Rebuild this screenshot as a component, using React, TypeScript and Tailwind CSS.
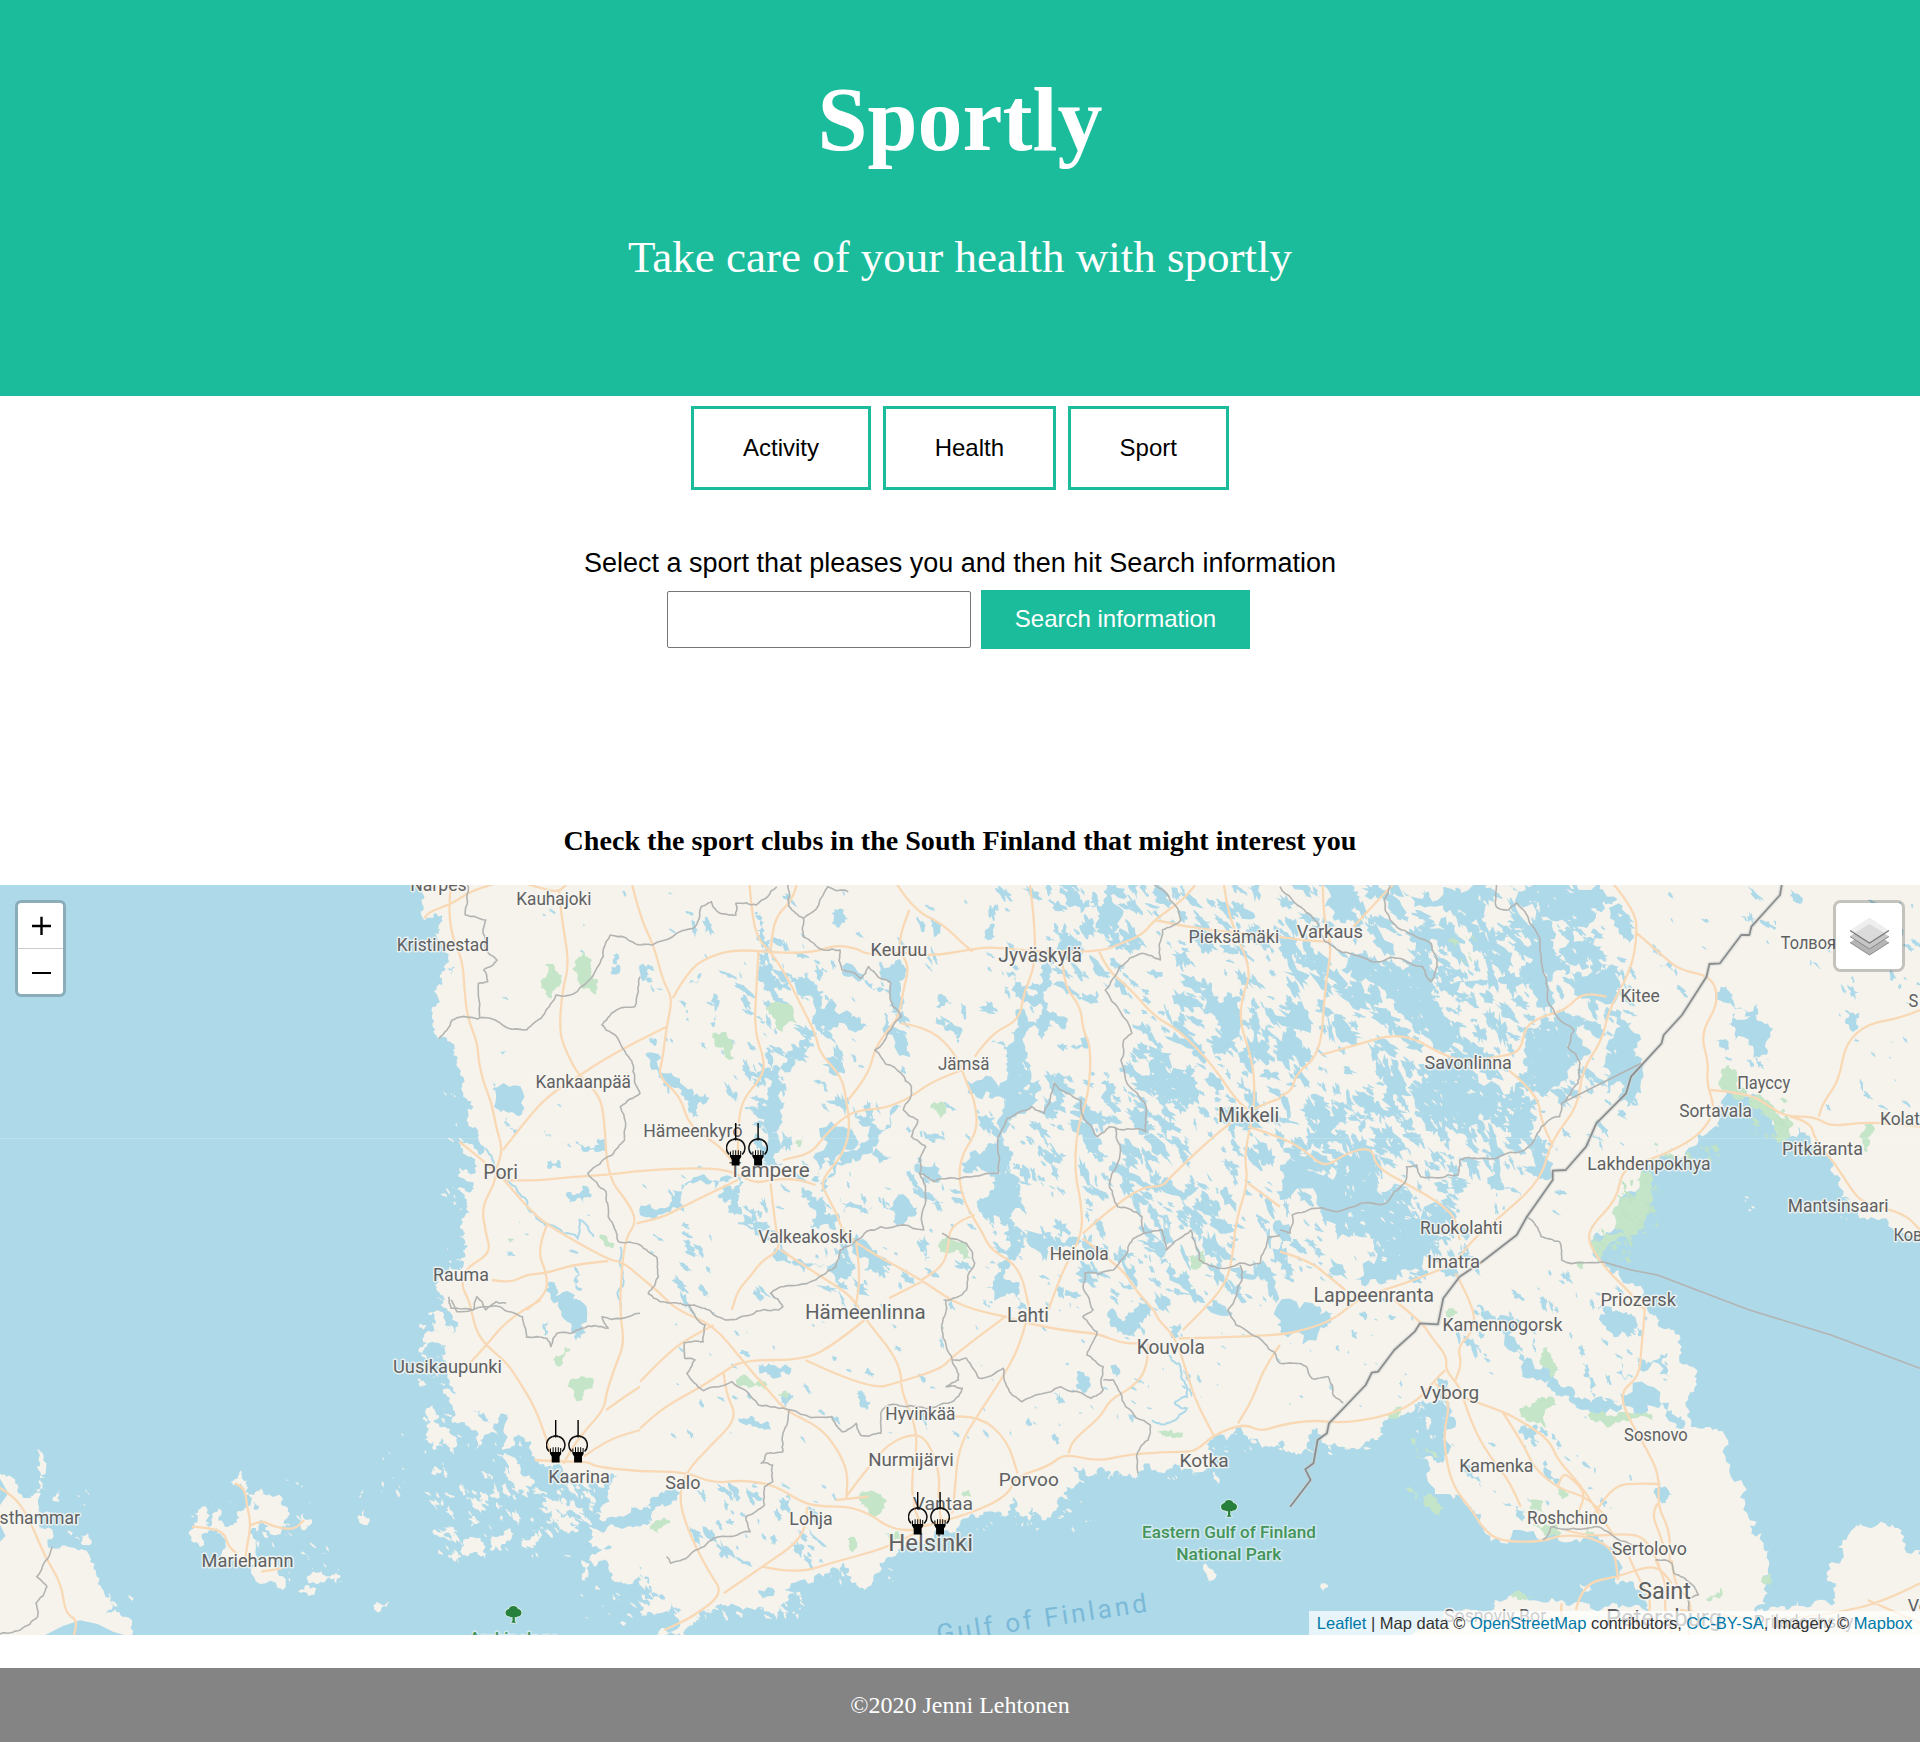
import React from "react";

/* ---------- map geometry ---------- */

type Pt = [number, number];
type Field = [string, number, number, number, number, number, number];
type Label = [string, string, number, number, number, number];

// Each map tile is described on a stretched grid: 2.45 units per px across, 3 units per px down.
const ORIGINS: Record<string, Pt> = {
  A: [0, -5],
  B: [640, -5],
  C: [1280, -5],
  D: [0, 415],
  E: [640, 415],
  F: [1280, 415],
};

const at = (spec: string): Pt[] => {
  const out: Pt[] = [];
  let origin: Pt = ORIGINS.A;
  spec
    .trim()
    .split(/\s+/)
    .forEach((token) => {
      if (ORIGINS[token]) {
        origin = ORIGINS[token];
        return;
      }
      const [x, y] = token.split(",").map(Number);
      out.push([origin[0] + x / 2.45, origin[1] + y / 3]);
    });
  return out;
};

const random = (seed: number) => () => {
  seed = (seed + 0x6d2b79f5) | 0;
  let t = Math.imul(seed ^ (seed >>> 15), 1 | seed);
  t = (t + Math.imul(t ^ (t >>> 7), 61 | t)) ^ t;
  return ((t ^ (t >>> 14)) >>> 0) / 4294967296;
};

const toPath = (pts: Pt[], closed: boolean) =>
  "M" + pts.map(([x, y]) => `${x.toFixed(1)} ${y.toFixed(1)}`).join("L") + (closed ? "Z" : "");

// Midpoint displacement gives shores and borders their ragged outline.
const rough = (pts: Pt[], amount: number, seed: number, closed = true): Pt[] => {
  const rnd = random(seed);
  let cur = pts;
  for (let level = 0; level < 3; level++) {
    const next: Pt[] = [];
    const n = cur.length;
    for (let i = 0; i < n; i++) {
      const a = cur[i];
      next.push(a);
      if (!closed && i === n - 1) break;
      const b = cur[(i + 1) % n];
      const dx = b[0] - a[0];
      const dy = b[1] - a[1];
      const len = Math.hypot(dx, dy);
      if (len < 2.5 || len > 300) continue;
      const k = (rnd() - 0.5) * amount;
      next.push([(a[0] + b[0]) / 2 - dy * k, (a[1] + b[1]) / 2 + dx * k]);
    }
    cur = next;
  }
  return cur;
};

const smooth = (pts: Pt[]) => {
  let d = `M${pts[0][0].toFixed(1)} ${pts[0][1].toFixed(1)}`;
  for (let i = 1; i < pts.length - 1; i++) {
    const mx = (pts[i][0] + pts[i + 1][0]) / 2;
    const my = (pts[i][1] + pts[i + 1][1]) / 2;
    d += `Q${pts[i][0].toFixed(1)} ${pts[i][1].toFixed(1)} ${mx.toFixed(1)} ${my.toFixed(1)}`;
  }
  const last = pts[pts.length - 1];
  return d + `L${last[0].toFixed(1)} ${last[1].toFixed(1)}`;
};

const area = (specs: string[], amount: number, seed: number) =>
  specs.map((s, i) => toPath(rough(at(s), amount, seed + i * 17), true)).join("");

const MAINLAND =
  "A 1022,10 1040,50 1030,95 1040,120 1065,100 1082,105 1080,150 1065,160 1085,200 1098,230 1082,275 1083,315 1070,318 1068,380 1060,440 1075,475 1095,480 1110,510 1120,560 1135,590 1130,625 1160,680 1145,690 1150,740 1168,745 1172,780 1210,850 1170,812 1140,790 1125,790 1150,830 1170,860 1150,880 1125,865 1140,900 1160,915 1155,935 1120,930 1145,960 1150,1000 1130,1020 1140,1060 1125,1070 1160,1100 1135,1110 1140,1130 1115,1140 1135,1160 1080,1190 1065,1215 1090,1260 1070,1250 D 1085,0 1105,40 1110,100 1085,120 1080,165 1100,200 1118,280 1085,280 1110,330 1110,370 1140,375 1165,450 1185,410 1200,400 1210,370 1245,340 1235,400 1230,450 1260,410 1280,410 1300,450 1310,480 1340,500 1380,515 1400,545 1440,560 1500,520 1512,530 1490,580 1455,645 1500,650 1568,630 E 20,615 60,580 85,560 60,620 30,660 0,680 D 1500,672 1450,690 1440,725 1500,740 1445,770 1455,800 1490,790 1500,840 1530,850 1568,790 E 20,830 30,880 60,890 80,920 110,930 60,985 40,1004 80,1000 130,975 140,950 175,935 215,920 290,920 350,910 380,880 300,895 290,870 370,850 450,830 490,815 500,790 520,850 550,870 580,820 610,770 640,740 700,730 760,700 800,655 840,645 885,650 905,620 915,590 940,650 950,680 960,600 985,660 1010,640 1030,590 1055,600 1045,560 1090,550 1060,500 1100,530 1130,500 1150,540 1200,520 1220,530 1240,490 1290,510 1310,490 1350,505 1400,460 1405,410 1440,420 1460,380 1490,420 1540,440 1568,440 F 0,425 10,450 40,465 75,455 78,390 92,385 110,430 150,440 200,440 240,420 245,385 290,350 320,340 350,300 395,300 390,230 412,250 415,320 400,400 403,480 375,480 345,475 360,530 425,597 440,580 470,630 490,640 503,700 540,728 640,725 680,707 750,710 800,735 820,775 828,855 880,870 900,880 905,935 830,925 760,925 700,915 690,900 600,895 560,888 525,900 520,930 490,940 400,945 350,990 300,1020 1600,1020 C 1600,0 A 1022,0";

const SHORES = [
  "D -10,515 15,530 45,580 100,580 125,640 90,650 130,700 115,720 130,745 190,750 220,770 235,820 255,880 260,940 300,950 318,1010 -10,1010",
  "D 85,450 100,455 105,480 115,570 95,570 90,500",
  "D 130,590 145,570 145,605",
  "D 200,705 215,700 220,735 202,735",
  "D 565,545 590,512 605,540 600,575 640,565 690,590 710,640 700,680 660,680 640,660 630,700 620,660 635,620 615,600 610,700 632,720 630,780 600,795 540,770 530,700 545,690 515,690 500,700 490,740 468,720 475,670 495,620 510,680 535,625 560,680 580,640 605,620 595,560",
  "D 615,805 680,790 700,860 680,865",
  "D 650,690 690,680 680,705",
  "D 745,640 765,665 740,690 735,665",
  "D 755,850 770,815 800,830 825,820 825,850 785,845",
  "D 730,875 750,855 775,865",
  "D 880,645 892,628 905,655 890,675",
  "D 877,590 888,568 885,600",
  "D 915,915 930,910 955,905 930,935",
  "D 1043,330 1060,318 1075,345 1050,360",
  "D 1048,40 1065,35 1090,75 1105,125 1060,125 1035,115 1045,95 1075,100",
  "D 1025,150 1045,125 1035,160",
  "D 1045,375 1090,380 1120,430 1110,465 1080,415 1065,450 1050,420",
  "D 1235,460 1265,480 1275,520 1310,550 1290,580 1245,540",
  "D 1330,605 1370,590 1400,610 1380,650 1335,640",
  "D 1370,690 1385,650 1405,660 1390,700",
  "D 1130,750 1160,712 1185,735 1180,770 1145,770",
  "D 1200,750 1205,700 1240,690 1260,700 1230,750",
  "D 1280,740 1305,690 1320,720 1295,740",
  "D 1060,690 1100,675 1115,700 1075,710",
  "D 1150,640 1165,655 1155,680",
  "D 1425,780 1445,790 1440,850 1425,825",
  "E 0,880 30,900 90,880 140,820 160,850 120,920 40,940 15,930",
  "E 1385,790 1405,840 1395,852",
  "E 1405,515 1415,530 1415,552",
  "F 103,850 118,855 108,875",
  "F 735,850 765,870 755,875",
  "F 355,350 370,365 362,390",
];

const WATERS = [
  "C 1060,745 1010,800 960,830 900,850 885,900 830,965 825,1030 780,1060 762,1085 770,1130 795,1150 830,1170 890,1230 900,1290 F 930,60 965,90 985,160 1010,200 1017,260 1000,300 1005,355 1060,390 1090,440 1130,540 1145,640 1155,700 1185,730 1197,780 1195,880 1165,920 1170,940 1180,925 1240,930 1300,920 1360,910 1362,860 1340,815 1380,760 1400,690 1420,670 1490,680 1520,700 1568,750 1610,760 C 1610,1060 1500,1045 1440,1020 1400,960 1370,920 1355,880 1350,840 1300,780 1270,740 1230,770 1190,690 1150,650 1090,650 1070,690",
  "B 300,560 340,560 400,540 430,480 400,480 360,520 345,560 335,600 340,640 345,700 325,760 330,820 350,850 310,855 295,800 285,700 255,685 310,680 320,620",
  "B 280,100 290,98 300,160 318,180 325,215 300,205 285,150",
  "B 290,215 310,270 330,300 370,330 370,280 385,300 410,285 435,320 445,360 440,385 500,395 540,410 560,440 500,430 440,420 470,470 430,440 430,400 400,350 310,320 290,270",
  "B 600,265 630,240 650,280 640,330 630,400 610,400 612,350 598,300",
  "B 985,255 1012,255 1010,310 1000,370 1020,400 1045,440 1005,420 985,480 960,440 950,520 945,570 930,640 980,600 975,660 915,690 900,720 905,800 900,860 925,910 935,960 910,1000 920,1050 945,1100 940,1140 905,1140 890,1060 840,1010 830,960 860,930 870,890 800,880 790,870 850,800 880,780 890,700 870,650 830,655 800,600 880,630 900,560 900,520 860,490 910,490 925,430 970,430 985,400 955,370 970,330 910,330 895,275 920,290 940,320 985,310",
  "B 880,1145 915,1150 900,1200 930,1230 950,1290 920,1250 900,1240 845,1225 870,1200",
  "B 940,1050 1010,1070 1080,1080 1060,1105 1000,1100 950,1090",
  "B 240,890 225,930 190,950 225,960 220,1000 250,1030 320,1040 270,1010 240,980 245,930",
  "B 230,893 140,890 80,930 60,985 0,1005 60,1000 100,960 140,905 200,905",
  "B 15,520 60,580 110,620 160,640 140,680 140,715 120,700 110,660 60,620 45,570",
  "B 400,920 450,950 450,1000 490,1010 480,1050 420,1045 430,990 395,950",
  "B 490,950 570,980 540,1000 500,1000",
  "B 440,910 470,860 540,800 560,760 620,700 640,680 600,750 570,800 620,830 540,840 480,880 460,940",
  "B 430,820 500,740 520,740 530,800 480,830 440,870 440,900 420,900",
  "B 330,1105 420,1150 480,1110 500,1135 525,1150 520,1180 480,1215 440,1160 370,1145",
  "B 600,980 660,960 665,1010 620,1025",
  "B 530,1060 580,1110 580,1180 550,1130",
  "B 680,1080 710,1130 700,1145",
  "B 680,850 740,890 700,895",
  "B 720,940 745,970 730,990",
  "B 495,260 560,320 610,340 570,310 530,300",
  "B 605,420 640,460 660,530 625,480",
  "B 360,530 380,505 410,500 380,540",
  "B 725,410 780,440 780,490 760,450",
  "B 470,130 490,85 510,120 490,140",
  "B 845,160 865,130 860,180",
  "B 725,380 750,350 765,375 735,385",
  "B 180,340 190,380 182,440 172,430",
  "B 120,310 150,280 140,310",
  "B 1210,500 1240,540 1270,530 1330,570 1370,560 1360,620 1340,680 1290,670 1260,620 1220,590 1250,580",
  "B 1380,330 1420,370 1470,350 1470,400 1450,500 1410,480 1420,430 1380,390",
  "B 1150,580 1165,640 1150,680 1130,650",
  "B 1080,680 1120,700 1115,760 1110,820 1085,780",
  "B 1210,680 1245,690 1240,760 1210,740",
  "B 1055,500 1090,460 1100,500 1070,510",
  "B 1025,190 1040,130 1060,170 1070,220 1045,240",
  "B 1030,20 1070,60 1130,80 1150,30 1175,120 1160,160 1120,90 1080,100",
  "B 1280,900 1370,920 1320,930",
  "B 1275,1080 1300,1150 1330,1210 1300,1190",
  "C 125,185 200,220 260,240 340,250 380,290 370,350 400,400 440,450 480,520 400,520 340,430 280,360 230,310 150,270",
  "C 390,320 480,310 600,280 610,300 520,320 420,360",
  "C 560,15 620,15 780,10 790,70 740,140 640,110 660,180 700,240 740,290 830,300 830,345 720,290 680,270 660,330 665,380 620,340 590,300 620,240 600,160",
  "C 90,10 170,15 185,120 150,130 110,80",
  "C 300,30 400,20 500,100 520,150 440,90 380,80",
  "C 690,150 760,170 780,240 830,260 830,300 740,270",
  "C 350,590 480,580 600,600 635,660 630,710 590,760 540,740 490,700 500,750 420,740 350,700 330,640",
  "C 595,470 600,440 640,410 700,400 720,420 760,510 730,540 700,600 620,610 595,550",
  "C 800,380 830,390 860,450 870,530 890,560 885,640 850,680 845,620 800,640 780,560 830,540 820,460",
  "C 1115,400 1160,400 1195,430 1195,510 1160,535 1115,480 1095,435",
  "C 1385,390 1420,400 1410,450 1385,420",
  "C 1080,320 1110,360 1170,370 1170,385 1110,380",
  "C 1065,480 1085,480 1090,515",
  "C 930,255 970,260 970,290",
  "C 830,70 855,140 855,190 830,160",
  "C 150,830 220,800 230,880 310,920 430,1000 420,1060 360,1090 350,1150 290,1180 240,1210 180,1200 240,1120 200,1060 100,1020 100,990 0,960 0,870 60,850 130,900",
  "C 620,800 655,780 670,850 650,900 620,890",
  "C 80,700 140,720 130,780 60,810 90,750",
  "C 0,1020 50,1100 60,1120 0,1100",
  "C 515,890 580,930 590,950 530,930",
  "C 780,1290 850,1295 F 870,50 860,100 800,90 790,20",
  "F 880,170 920,180 950,160 955,230 890,215",
  "F 480,20 530,60 580,130 620,190 680,240 720,290 760,310 840,310 840,325 740,330 690,290 660,240 590,200 560,150 500,60",
  "F 830,280 930,300 960,330 990,380 970,370 900,315 840,305",
  "F 585,375 620,375 635,430 600,420",
  "F 740,190 760,240 780,290 830,300 770,300 745,230",
  "F 820,160 870,230 850,240",
  "F 665,400 690,440 680,450",
  "F 650,480 690,540 675,560",
  "F 450,500 490,540 495,560 460,530",
  "F 930,540 945,560 945,610 935,610",
  "F 545,605 600,650 595,665",
  "F 0,60 80,10 130,40 100,80 0,95",
  "A 1345,1205 1400,1240 1420,1270 D 1420,0 1435,100 1410,120 1385,60 1350,0",
  "A 1205,600 1220,620 1285,685 1240,695 1215,655",
  "A 1240,710 1270,755 1250,740",
  "A 1410,785 1430,800 1455,805 1490,775 1488,800 1470,815 1440,815",
  "A 1393,935 1425,920 1450,945 1430,968 1397,968",
  "A 1395,1155 1425,1225 1410,1225",
  "A 1340,845 1370,840 1370,865",
  "A 1495,280 1500,222 1518,235",
  "A 1095,265 1115,262 1108,285",
  "A 1225,515 1242,515 1235,535",
  "A 1335,750 1355,765 1340,770",
  "D 1330,105 1330,70 1345,60 1342,100",
  "E 290,195 325,195 370,215 320,230 292,220",
  "E 530,280 550,285 555,330 538,315",
  "E 1070,220 1100,230 1080,270 1055,275 1075,250",
  "E 1150,30 1190,60 1220,20 1255,50 1235,55 1210,110 1170,100",
  "E 1295,75 1325,70 1320,110 1300,100",
  "E 240,355 290,365 320,390 300,385",
  "E 345,290 380,300 360,320",
  "D 1155,330 1190,350 1200,370 1180,355",
];

// Narrow rivers and channels.
const RIVERS = [
  "A 1190,805 1210,850 1250,910 1290,960 1310,1000 1350,1035 1415,1075 1420,1020 1455,1070",
  "A 1520,1100 1525,1190 1522,1290",
  "B 15,520 45,570 70,640",
  "B 240,1030 330,1055 345,1110",
  "E 1295,165 1320,190 1330,240 1340,290 1310,310 1340,325 1290,370 1255,360",
  "B 600,400 620,460 660,530",
  "C 610,300 660,330 665,400",
];

// Tile, x0, y0, x1, y1, count, largest half-length in px.
const LAKE_FIELDS: Field[] = [
  ["A", 1180, 40, 1560, 1290, 16, 4],
  ["B", 0, 30, 560, 500, 45, 7],
  ["B", 230, 220, 560, 480, 24, 9],
  ["B", 200, 440, 700, 840, 44, 9],
  ["B", 280, 540, 350, 860, 22, 8],
  ["B", 0, 840, 700, 1290, 66, 9],
  ["B", 560, 30, 1000, 420, 36, 8],
  ["B", 900, 260, 1040, 1140, 30, 10],
  ["B", 1000, 15, 1568, 360, 140, 11],
  ["B", 990, 560, 1300, 840, 54, 9],
  ["B", 1190, 360, 1568, 860, 160, 11],
  ["B", 680, 680, 1080, 1060, 50, 9],
  ["B", 1080, 860, 1568, 1290, 165, 10],
  ["B", 560, 1040, 1080, 1290, 34, 7],
  ["C", 0, 15, 600, 560, 240, 13],
  ["C", 580, 20, 880, 420, 66, 11],
  ["C", 0, 560, 640, 880, 215, 12],
  ["C", 0, 860, 460, 1200, 140, 9],
  ["C", 590, 400, 880, 800, 66, 9],
  ["C", 440, 800, 700, 1000, 16, 7],
  ["C", 880, 30, 1568, 340, 30, 7],
  ["C", 1340, 230, 1568, 700, 16, 5],
  ["C", 1000, 380, 1260, 560, 8, 4],
  ["C", 440, 1150, 880, 1290, 14, 7],
  ["E", 40, 30, 780, 420, 40, 5],
  ["E", 800, 0, 1290, 420, 40, 5],
  ["E", 1280, 0, 1568, 300, 18, 4],
  ["E", 130, 540, 480, 800, 46, 8],
  ["F", 0, 0, 330, 320, 22, 4],
  ["F", 420, 0, 980, 240, 36, 8],
  ["F", 420, 300, 940, 640, 24, 5],
];

const ISLAND_FIELDS: Field[] = [
  ["A", 1085, 600, 1140, 1200, 16, 3],
  ["D", 1030, 60, 1110, 380, 24, 4],
  ["D", 1040, 330, 1320, 620, 46, 5],
  ["D", 1050, 560, 1430, 770, 70, 6],
  ["D", 1340, 560, 1460, 700, 34, 7],
  ["D", 930, 400, 1000, 600, 10, 3],
  ["D", 460, 530, 780, 780, 30, 3],
  ["D", 700, 740, 860, 880, 12, 3],
  ["D", 60, 570, 220, 720, 14, 3],
  ["D", 230, 880, 330, 1000, 12, 4],
  ["D", 1420, 860, 1568, 980, 12, 3],
  ["E", 0, 620, 150, 960, 60, 7],
  ["E", 140, 880, 400, 950, 40, 4],
  ["E", 460, 770, 640, 850, 18, 3],
  ["E", 800, 600, 1130, 690, 30, 3],
  ["E", 1100, 500, 1400, 540, 16, 3],
  ["E", 1400, 380, 1568, 460, 14, 3],
  ["F", 0, 440, 240, 465, 14, 3],
  ["F", 330, 280, 410, 420, 18, 3],
  ["C", 1370, 900, 1400, 1030, 8, 4],
  ["C", 1135, 950, 1175, 995, 4, 4],
  ["C", 130, 820, 440, 1150, 110, 3],
  ["C", 340, 580, 630, 740, 60, 3],
  ["C", 190, 220, 440, 500, 40, 3],
  ["C", 600, 30, 800, 300, 26, 4],
  ["C", 600, 430, 730, 600, 16, 2],
  ["B", 1230, 540, 1370, 680, 26, 2],
  ["B", 840, 540, 960, 1100, 34, 2],
];

const PARK_FIELDS: Field[] = [
  ["C", 830, 900, 930, 1060, 60, 4],
  ["C", 770, 1050, 860, 1150, 34, 3],
  ["C", 900, 790, 1080, 850, 26, 4],
  ["C", 1150, 650, 1250, 770, 34, 4],
  ["C", 420, 170, 490, 250, 12, 4],
];

const scatter = (fields: Field[], seed: number) => {
  const rnd = random(seed);
  let d = "";
  fields.forEach(([tile, x0, y0, x1, y1, count, size]) => {
    const [ox, oy] = ORIGINS[tile];
    for (let i = 0; i < count; i++) {
      const cx = ox + (x0 + rnd() * (x1 - x0)) / 2.45;
      const cy = oy + (y0 + rnd() * (y1 - y0)) / 3;
      const long = size * (0.3 + Math.pow(rnd(), 1.8) * 0.95);
      const wide = long * (0.22 + rnd() * 0.36);
      const angle = 0.85 + (rnd() - 0.5) * 1.2;
      const pts: Pt[] = [];
      for (let k = 0; k < 16; k++) {
        const t = (k / 16) * Math.PI * 2;
        const r = 0.4 + rnd() * 1.05;
        const px = Math.cos(t) * long * r;
        const py = Math.sin(t) * wide * r;
        pts.push([
          cx + px * Math.cos(angle) - py * Math.sin(angle),
          cy + px * Math.sin(angle) + py * Math.cos(angle),
        ]);
      }
      d += toPath(pts, true);
    }
  });
  return d;
};

const PARKS = [
  "A 1335,255 1360,260 1370,320 1352,355 1325,325",
  "A 1410,240 1425,210 1450,240 1448,270 1465,300 1460,345 1435,325 1415,290",
  "A 1468,1065 1505,1090 1500,1105 1480,1090",
  "A 1243,1078 1260,1080 1250,1090",
  "B 308,385 330,365 385,430 350,455 325,410",
  "B 178,458 212,455 232,535 208,530 182,490",
  "B 712,685 740,665 750,700 735,720",
  "B 378,790 400,768 388,802",
  "B 735,1085 760,1065 800,1090 815,1140 790,1140 780,1110 735,1115",
  "B 1343,1130 1382,1110 1370,1165 1348,1160",
  "C 1083,590 1100,555 1120,580 1120,625 1145,635 1140,650 1085,630",
  "C 1150,650 1190,660 1215,700 1255,725 1250,770 1210,775 1195,710",
  "C 1430,730 1452,735 1440,815 1430,810",
  "C 885,870 910,880 915,960 890,1030 850,1070 820,1040 830,965 880,930",
  "C 762,1085 800,1060 860,1085 800,1100 790,1145",
  "C 730,1145 745,1145 745,1165 728,1160",
  "D 1355,180 1385,140 1398,150 1370,200",
  "D 1390,260 1425,228 1455,240 1430,275 1415,305 1405,285",
  "E 235,240 265,232 305,245 305,270 265,265",
  "E 337,285 365,280 360,305",
  "E 540,580 570,572 605,600 600,625 560,640 540,615",
  "E 25,690 45,660 75,665 45,700",
  "E 1268,395 1300,388 1330,395 1330,410 1290,410",
  "E 510,715 525,710 525,760 512,745",
  "E 790,575 805,570 810,590 792,590",
  "E 600,700 625,695 640,720 610,725",
  "F 640,160 655,142 675,190 665,235 640,195",
  "F 587,325 615,320 640,290 678,315 650,385 590,350",
  "F 755,343 820,350 860,340 910,342 920,362 830,368 800,382 760,360",
  "F 262,345 295,318 290,355",
  "F 318,412 330,415 345,475 335,470",
  "F 358,435 390,470 375,470",
  "F 350,590 375,590 402,625 390,647 355,620",
  "F 308,565 335,580 335,600",
  "F 610,605 645,608 645,635 612,630",
  "F 617,672 680,675 690,700 640,690",
  "F 682,568 708,578 690,597",
  "F 750,680 770,700 765,715 748,700",
  "F 1185,825 1203,820 1200,865 1183,850",
  "F 1045,895 1080,862 1080,890 1050,905",
  "F 565,882 600,882 620,892 580,892",
  "F 405,35 420,25 435,40 415,55",
];

const ROADS = [
  "A 1105,10 1098,90 1110,180 1133,240 1138,330 1145,410 1170,490 1172,540 1185,610 1205,670 1215,740 1232,810 1215,870 1212,910 1180,980 1190,1060 1203,1120 1140,1165 1130,1220 D 1150,0 1165,90 1192,138 1240,185 1270,240 1310,320 1340,420 1350,470 1385,490",
  "A 1040,115 1045,98 1110,70 1150,35 1210,12",
  "A 1290,12 1340,30 1370,35 1390,10",
  "A 1370,35 1375,110 1395,250 1378,330 1370,450 1385,510 1418,588 1465,640 1480,700 1488,890 1540,970 1560,1025 1535,1070 1525,1140 1518,1290 D 1530,130 1510,190 1485,280 1480,330 1420,410 1385,480",
  "A 1568,480 1490,530 1418,588 1340,650 1290,720 1232,810",
  "A 1125,785 1215,870 1290,980 1340,1035 1490,1140 1525,1145 1568,1190 B 50,1240 90,1290 E 180,75 250,180 320,280 360,335 440,380 485,450 510,520 505,600",
  "A 1240,900 1310,903 1400,890 1488,885 1568,872 B 140,863 220,870 280,910 320,900 380,895 430,915",
  "A 1340,1035 1315,1110 1340,1180 1340,1240 1290,1290",
  "A 1205,1200 1250,1210 1290,1183 1340,1180 1400,1155 1490,1143",
  "A 1548,10 B 0,110 35,200 55,300 80,355 65,440 55,540 45,590 100,650 120,740 200,800 240,870",
  "D 1325,0 1250,50 1190,138 1150,190",
  "D 1485,330 1530,290 1568,260",
  "D 1430,470 1485,420 1568,390",
  "D 1310,480 1385,485 1440,485 1460,500 1568,515 E 110,515 180,550 250,540 330,555 400,610 450,620 510,620 560,640 620,690 690,690",
  "B 268,10 275,110 290,180 320,215 360,290 400,390 430,460 440,520 495,590 505,660 515,740 500,820 440,905 460,950 485,1010 495,1050 530,1090 600,1140 690,1200 760,1260 820,1290 E 895,50",
  "B 385,10 375,60 330,110 320,210",
  "B 80,355 120,265 180,225 240,208 360,220 430,215 480,195 530,205 560,225 650,215 720,228 800,210 860,200 970,215 1130,215 1180,190 1230,165 1260,120 1330,60 1360,15",
  "B 0,480 65,440",
  "B 290,215 285,330 280,450 305,540 300,590 250,660 240,740 240,850",
  "B 628,10 670,90 740,130 790,190 815,215",
  "B 660,90 640,150 635,210 660,260 645,330 635,410 600,460 575,510 560,580 510,660",
  "B 640,430 700,440 760,500 790,570 800,610 820,660 828,750 790,820 780,890 795,970 840,1060 860,1110 930,1160 955,1290",
  "B 790,570 720,600 660,655 600,685 540,690 500,710 450,770 420,820 350,840",
  "B 820,530 860,460 930,420 940,340 970,250 965,110 955,10",
  "B 1035,215 1035,310 1080,380 1085,450 1105,500 1100,640 1070,750 1065,880 1080,960 1085,1060 1040,1160 1000,1290",
  "B 1125,215 1145,270 1200,325 1260,410 1320,450 1400,550 1460,660 1500,700",
  "B 1430,10 1440,110 1500,270 1475,350 1470,430 1490,500 1505,580 1505,690 1480,820 1490,910 1460,1020 1450,1150 1430,1220 1380,1290 E 1330,90",
  "B 1568,655 1510,680 1430,740 1300,890 1280,920 1230,920 1150,990 1085,1060",
  "B 1260,120 1340,140 1430,155 1568,170 C 60,182 125,185",
  "B 1085,1075 1150,1140 1190,1180 1220,1240 1260,1290 E 1270,60 1310,110 1330,180 1360,300 1405,405",
  "B 1490,740 1568,770 C 60,810 110,865 160,820 225,800 235,860 300,905 380,960 430,1010 440,1080",
  "B 1490,910 1568,980",
  "B 320,910 330,1030 345,1110 300,1140 270,1190 240,1230 225,1290",
  "B 240,900 120,970 60,1010 0,1028 A 1560,1030",
  "B 345,1110 430,1180 510,1240 540,1290 E 560,70 620,160 640,220 640,270 670,360 680,430 665,530 670,620 690,680",
  "B 530,1090 540,1180 530,1270",
  "B 690,1205 610,1255",
  "B 820,1005 760,1030 755,1110 740,1160 690,1200",
  "E 550,60 480,130 405,180 250,180 200,220 150,260 60,320 0,385",
  "E 180,75 110,120 60,170 0,245",
  "E 205,220 210,280 240,355 170,440 110,520 95,600 120,700 170,820 205,880 130,950 60,990",
  "E 405,180 560,270 640,245 740,205 765,170 895,50",
  "E 945,70 930,140 885,240 830,340 780,440 770,590 765,640",
  "E 770,350 830,345 900,420 925,520",
  "E 895,50 945,70 1060,95 1120,100 1180,130 1220,130",
  "E 690,680 790,650 900,590 920,530 1000,500 1040,460 1120,485 1200,462 1320,455 1360,455 1405,405 1480,370 1520,395 1568,375 F 80,360 160,370 270,345 340,300 380,240 405,210",
  "E 1320,115 1400,113 1568,105 F 60,90 130,60 200,-10 C 280,1220",
  "E 1245,130 1245,200 1210,260 1150,300 1130,350 1060,420 1050,460",
  "E 1568,135 1530,200 1500,300 1465,370",
  "E 205,880 300,800 400,715 410,620",
  "E 300,800 380,822 480,785 600,745 690,690",
  "E 505,590 560,500 610,430 670,400 705,420 735,520 730,600 740,680",
  "E 480,600 560,590",
  "C 105,10 105,110 128,200 110,320 100,520 40,580 30,630 0,650",
  "C 100,525 200,490 270,465 330,475 390,520 450,545 540,530 590,515 600,440 640,410 700,390 740,338 800,350",
  "C 180,140 240,60 280,10",
  "C 815,10 870,90 875,170 860,270 805,390 790,480 740,570 730,680 665,780 640,900 540,1010 470,1080 430,1150 340,1195 280,1220",
  "C 560,570 630,640 640,720 665,790",
  "C 875,160 940,230 980,270 1060,290 1075,370 1030,460 1050,550 1045,610 1065,680 1050,730 1010,780 930,830 840,860 825,960 760,1040 755,1090 800,1170 860,1240 890,1290 F 895,20 885,150 880,230 830,280 860,370 900,450 930,530 925,620 955,690 955,790",
  "C 1055,630 1150,640 1200,680 1240,710 1310,710 1350,740 1440,725 1568,740",
  "C 1250,710 1300,725 1310,780 1360,850 1400,930 1430,970 1530,1000 1568,1050",
  "C 1568,390 1520,415 1440,430 1385,490 1370,600 1330,670 1320,710",
  "C 0,1115 70,1140 130,1200 160,1230",
  "C 430,1180 480,1290 F 470,100 435,140 445,190 430,240",
  "F 280,0 350,70 370,110 410,170 405,210 440,260 450,300 480,400 520,480 560,540 590,620",
  "F 380,250 420,290 400,400 410,500 430,570 470,630 500,690 540,725 640,725 690,705 760,710 820,750 828,840",
  "F 440,290 540,330 600,370 660,420 680,480 740,560 780,640 820,710",
  "F 545,335 600,440 620,500 680,565 750,590 800,650",
  "F 680,565 690,520 710,530 750,580 730,640",
  "F 930,552 880,550 820,555 770,640",
  "F 925,610 910,640 930,700 945,760",
  "F 725,930 740,850 830,830 920,790 960,850",
  "F 700,690 750,710 860,700 900,720 930,800",
  "F 855,770 880,840 910,900 900,960",
  "F 920,780 950,850 940,930 960,1000",
  "F 960,780 965,860 1010,900 1000,1010",
  "F 1568,850 1480,905 1360,940 1230,960 1100,950 980,930",
  "F 1440,900 1568,970",
  "F 690,910 685,960 720,1005",
  "D -5,560 40,590 80,680 110,770 150,850 160,940 190,960 180,1010",
  "D 575,550 600,560 605,620 615,670 605,740 600,790",
  "D 470,680 520,685 550,700 560,740 580,760",
  "D 615,675 640,660 670,680 720,690 745,660",
  "D 640,815 690,805",
];

const BORDERS = [
  "A 1145,10 1145,60 1140,105 1190,120 1188,200 1218,240 1185,270 1195,305 1172,310 1175,412",
  "A 1075,475 1108,420 1140,410 1200,415 1290,450 1335,400 1362,345 1403,343 1470,250 1495,165 1568,195 B 30,195 130,145 150,80 175,65 190,95 235,105 235,70 285,75 335,20",
  "A 1568,290 1555,380 1498,400 1475,435 1500,460 1540,530 1555,590 1568,640 1520,680 1530,780 1500,825 1440,880 1485,935 1490,1010 1515,1085 1568,1095 B 40,1130 45,1190 20,1240 50,1265 100,1270 E 120,15 160,75 155,125 108,128 110,175 135,180 115,220 155,272 225,245 290,315 370,330 470,350 495,395 530,370 540,405 590,400 590,340 610,315 680,320 765,305 790,265 750,260 780,240 765,180 740,90 750,0 B 745,1260 800,1230 820,1150 800,1090 740,1060",
  "B 362,10 365,80 400,115 400,170 450,210 490,210 495,270 540,295 560,260 615,310 620,380 640,410 575,510 640,580 665,620 645,690 680,720 665,770 700,800 685,880 720,905 800,890 878,880 900,715 960,680 990,700 1015,610 1080,660 1090,720 1120,770 1150,740 1240,755 1240,680 1190,600 1185,480 1205,460 1140,330 1175,260 1230,220 1275,240 1280,150 1325,120 1290,40 1260,15",
  "B 400,115 460,20 510,35",
  "B 1165,745 1170,850 1150,920 1170,980 1230,1010 1235,1060 1280,1050 1290,1110 1350,1050 1370,1140 1420,1165 1520,1150 1540,1070 1568,1065",
  "B 685,880 700,960 695,1050 590,1040 530,1080 490,1110 480,1160 440,1190 350,1220 320,1240 350,1280 E 340,30 270,45 215,60 170,30 120,15",
  "B 1235,1060 1200,1090 1160,1170 1090,1180 1085,1220 1110,1290 E 1085,50 1120,95 1095,165 1135,200 1135,270 1105,295 1030,260 935,305 905,275 890,205 830,235 800,175 765,180",
  "E 1135,240 1160,240 1190,320 1250,375 1245,420 1220,455 1220,520",
  "E 365,330 350,400 350,455 310,460 297,490 325,495 325,545 305,560 305,615 260,650 270,695 180,715 130,755 75,790 65,770",
  "B 1470,1155 1475,1200 1440,1290 E 1460,75 1530,130 1568,190 F 65,200 78,235 118,230 130,285 155,310",
  "D 1105,0 1120,35 1225,20 1280,50 1290,112 1340,115 1350,140 1365,100 1425,85 1490,85 1475,50 1568,40",
  "A 1100,1250 1105,1285 D 1160,30 1165,0 A 1168,1250 1190,1290 1215,1265 1240,1270",
  "D 128,740 90,830 115,860 88,910 92,950 50,990 0,1002",
  "C 530,10 530,80 560,90 580,68 600,95 640,230 655,360 720,450 705,500 735,550 730,610 690,670 685,710 640,740 590,815 490,835 440,840 435,885 345,890 335,855 310,860 305,910 260,970 140,995 95,985 30,1005 25,1060 0,1050",
  "C 605,1010 640,1070 685,1085 690,1140 790,1145",
  "C 0,20 60,90 85,120 110,185 170,220 240,245 290,235 350,260 370,305 385,260 370,190 310,155 270,120 255,60 270,20",
  "F 645,720 665,680 720,685 770,680 830,720 880,740",
  "F 920,780 960,790 965,820 1005,850 1025,885 1000,900 1005,940",
];

// Borders that run straight across water.
const STRAIGHT_BORDERS = [
  "C 690,670 885,550",
  "C 790,1145 860,1170 925,1185 1000,1220 1150,1290 F 1350,105 1568,205",
];

const STATE_BORDER =
  "C 1230,10 1225,45 1155,140 1150,165 1130,165 1078,250 1052,252 1045,290 985,405 940,465 935,490 860,590 848,640 775,730 750,800 700,870 668,872 668,900 605,1010 580,1065 495,1145 440,1190 400,1255 F 387,73 343,70 330,95 280,150 240,215 225,218 210,255 120,370 115,400 92,420 82,490 62,508 75,540 25,620";

// Tile, text, left edge, right edge, baseline, font size.
const LABELS: Label[] = [
  ["A", "Närpes", 1005, 1143, 33, 17.5],
  ["A", "Kauhajoki", 1265, 1449, 74, 17.5],
  ["A", "Kristinestad", 972, 1198, 212, 17.5],
  ["A", "Kankaanpää", 1312, 1546, 625, 17.5],
  ["A", "Pori", 1184, 1269, 898, 19.5],
  ["A", "Rauma", 1061, 1198, 1203, 18],
  ["B", "Keuruu", 565, 704, 228, 17.5],
  ["B", "Jyväskylä", 878, 1083, 245, 20],
  ["B", "Pieksämäki", 1344, 1566, 190, 17.5],
  ["B", "Jämsä", 730, 856, 571, 17.5],
  ["B", "Mikkeli", 1416, 1566, 725, 19.5],
  ["B", "Hämeenkyrö", 8, 251, 770, 17.5],
  ["B", "Tampere", 218, 416, 890, 20],
  ["B", "Valkeakoski", 290, 520, 1088, 17.5],
  ["B", "Heinola", 1004, 1148, 1139, 17.5],
  ["C", "Varkaus", 41, 203, 175, 17.5],
  ["C", "Толвоя", 1227, 1362, 207, 17.5],
  ["C", "Kitee", 834, 930, 366, 17.5],
  ["C", "S", 1540, 1564, 380, 17.5],
  ["C", "Savonlinna", 354, 568, 567, 17.5],
  ["C", "Пауссу", 1120, 1250, 626, 17.5],
  ["C", "Sortavala", 978, 1156, 711, 17.5],
  ["C", "Kolat", 1470, 1568, 734, 17.5],
  ["C", "Lakhdenpokhya", 753, 1055, 870, 17.5],
  ["C", "Pitkäranta", 1230, 1428, 824, 17.5],
  ["C", "Mantsinsaari", 1244, 1491, 995, 17.5],
  ["C", "Ruokolahti", 343, 545, 1063, 17.5],
  ["C", "Ков", 1503, 1574, 1083, 17.5],
  ["C", "Imatra", 360, 490, 1165, 17.5],
  ["C", "Lappeenranta", 82, 377, 1265, 19.5],
  ["C", "Priozersk", 785, 970, 1278, 17.5],
  ["D", "Uusikaupunki", 963, 1230, 219, 17.5],
  ["D", "Kaarina", 1343, 1494, 549, 17.5],
  ["D", "sthammar", -1, 196, 671, 17.5],
  ["D", "Mariehamn", 494, 719, 800, 17.5],
  ["E", "Hämeenlinna", 404, 700, 57, 20],
  ["E", "Lahti", 899, 1002, 67, 20],
  ["E", "Kouvola", 1217, 1384, 163, 19.5],
  ["E", "Hyvinkää", 601, 773, 360, 17.5],
  ["E", "Nurmijärvi", 559, 769, 498, 17.5],
  ["E", "Salo", 62, 148, 568, 17.5],
  ["E", "Porvoo", 879, 1026, 558, 18],
  ["E", "Vantaa", 668, 816, 630, 18.5],
  ["E", "Lohja", 366, 472, 676, 17.5],
  ["E", "Helsinki", 608, 816, 752, 23.5],
  ["E", "Kotka", 1322, 1442, 500, 18.5],
  ["F", "Kamennogorsk", 398, 692, 93, 17.5],
  ["F", "Vyborg", 343, 488, 297, 19],
  ["F", "Sosnovo", 843, 999, 423, 17.5],
  ["F", "Kamenka", 439, 621, 515, 17.5],
  ["F", "Roshchino", 605, 803, 672, 17.5],
  ["F", "Sertolovo", 813, 997, 766, 17.5],
  ["F", "Saint", 877, 1007, 898, 23.5],
  ["F", "Petersburg", 799, 1083, 978, 23.5],
  ["F", "Sosnoviy Bor", 402, 652, 965, 17.5],
  ["F", "Priladozhsky", 1160, 1405, 985, 17.5],
  ["F", "Vo", 1538, 1590, 937, 17.5],
];

const PARK_LABELS: Label[] = [
  ["E", "Eastern Gulf of Finland", 1230, 1656, 713, 16.5],
  ["E", "National Park", 1314, 1571, 779, 16.5],
  ["D", "Archipelago", 1150, 1370, 1031, 16.5],
];

const landPath = toPath(rough(at(MAINLAND), 0.75, 11), true);
const shorePath = area(SHORES, 0.7, 301);
const waterPath = area(WATERS, 0.85, 71);
const riverPath = RIVERS.map((r, i) => toPath(rough(at(r), 0.4, 800 + i, false), false)).join("");
const lakePath = scatter(LAKE_FIELDS, 5);
const islandPath = scatter(ISLAND_FIELDS, 23);
const parkPath = area(PARKS, 0.6, 911);
const parkSpecks = scatter(PARK_FIELDS, 47);
const roadPath = ROADS.map((r) => smooth(at(r))).join("");
const borderPath =
  BORDERS.map((b, i) => toPath(rough(at(b), 0.22, 500 + i, false), false)).join("") +
  STRAIGHT_BORDERS.map((b) => toPath(at(b), false)).join("");
const stateBorderPath = toPath(at(STATE_BORDER), false);

/* ---------- map pieces ---------- */

function MapLabel({ item, className }: { item: Label; className: string }) {
  const [tile, text, x0, x1, base, size] = item;
  const [ox, oy] = ORIGINS[tile];
  return (
    <text
      x={ox + x0 / 2.45}
      y={oy + base / 3}
      fontSize={size}
      textLength={(x1 - x0) / 2.45}
      lengthAdjust="spacingAndGlyphs"
      className={className}
    >
      {text}
    </text>
  );
}

function Tree({ x, y }: { x: number; y: number }) {
  return (
    <g
      transform={`translate(${x} ${y})`}
      className="fill-[#27803c] stroke-[#e3f1ee]"
      strokeWidth="1.6"
      paintOrder="stroke"
    >
      <path d="M8 0c2.6 0 4 1.400 4.400 3 2 .2 3.600 1.600 3.600 3.700 0 2.500-2 4-4 3.700-.8.900-1.800 1-2.700.7V15l1.300 1.800H5.600L7 15v-3.900c-1 .4-2 .2-2.700-.7C2 10.700 0 9.200 0 6.700 0 4.600 1.500 3.300 3.400 3 4 1.300 5.500 0 8 0Z" />
    </g>
  );
}

function MapCanvas() {
  return (
    <svg
      className="absolute inset-0 h-[750px] w-[1920px] bg-[#aed9e9] [font-family:Roboto,sans-serif]"
      viewBox="0 0 1920 750"
      aria-hidden="true"
    >
      <g className="fill-[#f5f3ec]">
        <path d={landPath} />
        <path d={shorePath} />
      </g>
      <path d={waterPath} className="fill-[#aed9e9]" />
      <path d={lakePath} className="fill-[#aed9e9]" />
      <path d={riverPath} fill="none" className="stroke-[#aed9e9]" strokeWidth="2" />
      <path d={islandPath} className="fill-[#f5f3ec]" />
      <path d={parkPath} className="fill-[#c5e5c8]" />
      <path d={parkSpecks} className="fill-[#bfe3c4]" />
      <path d={roadPath} fill="none" className="stroke-[#f9d9b5]" strokeWidth="2.300" strokeLinejoin="round" />
      <path d={borderPath} fill="none" className="stroke-[#b3b4b2]" strokeWidth="1.600" strokeLinejoin="round" />
      <path d={stateBorderPath} fill="none" className="stroke-[#cfd3d1]" strokeWidth="4.500" strokeLinejoin="round" opacity="0.5" />
      <path d={stateBorderPath} fill="none" className="stroke-[#8b8d8d]" strokeWidth="1.800" strokeLinejoin="round" />
      <path d="M0 253.500H1920" className="stroke-white/20" />
      <g paintOrder="stroke" strokeWidth="3" strokeLinejoin="round">
        {LABELS.map((item, i) => (
          <MapLabel key={i} item={item} className="fill-[#5f6163] stroke-[#f7f6f1]/80" />
        ))}
        {PARK_LABELS.map((item) => (
          <MapLabel key={item[1]} item={item} className="fill-[#45945a] font-medium stroke-[#d8edf0]/80" />
        ))}
      </g>
      <text
        transform="translate(938 758) rotate(-8.500)"
        fontSize="26"
        textLength="212"
        lengthAdjust="spacing"
        className="fill-[#7bb9d8]"
      >
        Gulf of Finland
      </text>
      <Tree x={1221} y={615} />
      <Tree x={505.5} y={721} />
    </svg>
  );
}

function RingsMarker({ className }: { className: string }) {
  return (
    <svg className={`absolute h-[43px] w-[42px] ${className}`} viewBox="0 0 42 43" aria-hidden="true">
      {[0, 22.4].map((dx) => (
        <g key={dx} transform={`translate(${dx} 0)`}>
          <path d="M9.700 0V17.500" stroke="#000" strokeWidth="1.400" />
          <path
            d="M3.200 31.500A9 9 0 0 1 6.700 16.500M12.700 16.500A9 9 0 0 1 16.200 31.500"
            fill="none"
            stroke="#111"
            strokeWidth="1.500"
          />
          <path d="M6.700 16.700Q9.700 15 12.700 16.700" fill="none" stroke="#111" strokeWidth="1.700" />
          <path
            d="M3.900 28.500H5V32H6.600V27.300H7.600V32H9.200V27.300H10.200V32H11.800V27.300H12.800V32H14.200V28H15.200V34L13.600 36.500V42.500H5.700V36.500L3.900 33.500Z"
            fill="#000"
          />
        </g>
      ))}
    </svg>
  );
}

function ZoomControl() {
  return (
    <div className="absolute left-[15px] top-[15px] flex flex-col overflow-hidden rounded-[6px] border-3 border-black/20 bg-clip-padding">
      <button
        type="button"
        aria-label="Zoom in"
        className="flex h-[46px] w-[45px] items-center justify-center rounded-t-[3px] border-b border-[#ccc] bg-white pl-[2px]"
      >
        <svg className="h-[19px] w-[19px]" viewBox="0 0 19 19">
          <path d="M0 10H19M9.500 .8V19" stroke="#000" strokeWidth="2.400" />
        </svg>
      </button>
      <button
        type="button"
        aria-label="Zoom out"
        className="flex h-[45px] w-[45px] items-center justify-center rounded-b-[3px] bg-white pl-[2px]"
      >
        <svg className="h-[19px] w-[19px]" viewBox="0 0 19 19">
          <path d="M0 11H19" stroke="#000" strokeWidth="2" />
        </svg>
      </button>
    </div>
  );
}

function LayersControl() {
  return (
    <button
      type="button"
      aria-label="Layers"
      className="absolute right-[15px] top-[15px] flex h-[72px] w-[72px] items-center justify-center rounded-[7.5px] border-3 border-black/20 bg-white bg-clip-padding"
    >
      <svg className="h-[39px] w-[39px]" viewBox="0 0 39 39">
        <path d="M0 25.500L19.500 12L39 25.500L19.500 38Z" fill="#b5b5b5" />
        <path d="M0 25.500L19.500 38L39 25.500" fill="none" stroke="#8a8a8a" strokeWidth="1" />
        <path d="M0 19.500L19.500 6L39 19.500L19.500 32Z" fill="#c6c6c6" />
        <path d="M0 19.500L19.500 32L39 19.500" fill="none" stroke="#8a8a8a" strokeWidth="1" />
        <path d="M0 13.500L19.500 .5L39 13.500L19.500 26Z" fill="#eeeeee" />
        <path d="M4.500 16L19.500 7L34.500 16L19.500 25Z" fill="#dbdbdb" />
        <path d="M0 13.500L19.500 26L39 13.500" fill="none" stroke="#777" strokeWidth="1.300" />
      </svg>
    </button>
  );
}

function Attribution() {
  return (
    <div className="absolute bottom-0 right-0 h-6 whitespace-nowrap bg-white/70 px-[7.5px] text-[16.5px] leading-[24px] text-[#333] [font-family:'Liberation_Sans',Arial,sans-serif]">
      <a className="text-[#0078a8]">Leaflet</a> | Map data © <a className="text-[#0078a8]">OpenStreetMap</a> contributors,{" "}
      <a className="text-[#0078a8]">CC-BY-SA</a>, Imagery © <a className="text-[#0078a8]">Mapbox</a>
    </div>
  );
}

/* ---------- page ---------- */

const SECTIONS = ["Activity", "Health", "Sport"];

export default function App() {
  return (
    <div className="flex min-h-[1743px] w-[1920px] flex-col bg-white text-black [font-family:'Liberation_Serif','Times_New_Roman',serif]">
      <header className="flex h-[396px] flex-col items-center bg-[#1bbc9b] pt-[68px] text-white">
        <h1 className="text-[90px] font-bold leading-[103px]">Sportly</h1>
        <p className="mt-[61px] text-[45px] leading-[51px]">Take care of your health with sportly</p>
      </header>

      <main className="flex flex-col [font-family:'Liberation_Sans',Arial,sans-serif]">
        <nav className="flex justify-center gap-3 pt-[10px]">
          {SECTIONS.map((name) => (
            <button key={name} type="button" className="h-[84px] border-3 border-[#1bbc9b] bg-white px-[48.8px] text-2xl">
              {name}
            </button>
          ))}
        </nav>

        <form className="mt-[57px] flex flex-col items-center">
          <label htmlFor="sport" className="text-[27px] leading-[32px]">
            Select a sport that pleases you and then hit Search information
          </label>
          <div className="mr-[3px] mt-[11px] flex items-center gap-[10px]">
            <input id="sport" className="h-[57px] w-[304px] rounded-[2px] border border-[#767676] bg-white px-2 text-2xl" />
            <button type="button" className="h-[59px] w-[269px] bg-[#1bbc9b] pb-[2px] text-2xl text-white">
              Search information
            </button>
          </div>
        </form>

        <h3 className="mt-[176px] text-center text-[28.08px] font-bold leading-[32px] [font-family:'Liberation_Serif','Times_New_Roman',serif]">
          Check the sport clubs in the South Finland that might interest you
        </h3>

        <section className="relative mt-[28px] h-[750px] overflow-hidden">
          <MapCanvas />
          <RingsMarker className="left-[726px] top-[238px]" />
          <RingsMarker className="left-[546px] top-[535px]" />
          <RingsMarker className="left-[907.5px] top-[607px]" />
          <ZoomControl />
          <LayersControl />
          <Attribution />
        </section>
      </main>

      <footer className="mt-[33px] flex h-[74px] items-center justify-center bg-[#848484] text-2xl text-white">
        <p>©2020 Jenni Lehtonen</p>
      </footer>
    </div>
  );
}
